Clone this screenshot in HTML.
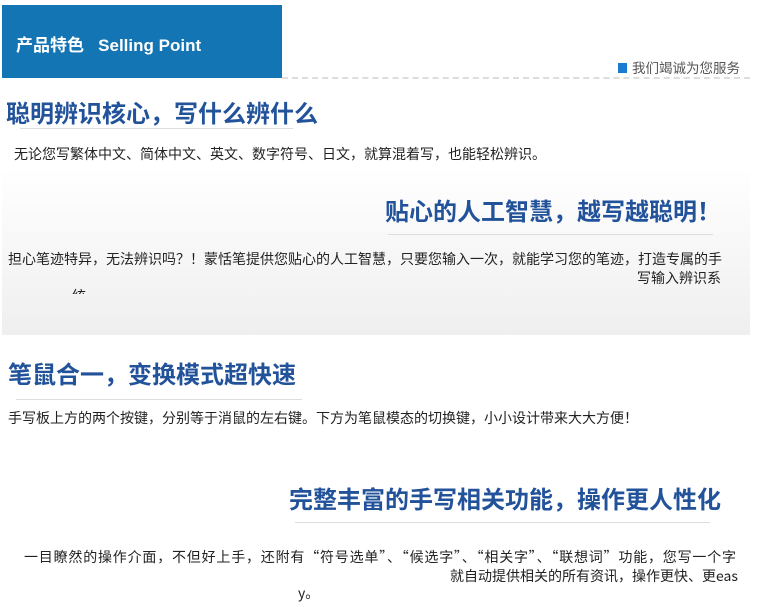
<!DOCTYPE html>
<html><head><meta charset="utf-8"><style>
body{margin:0;width:757px;height:607px;background:#fff;position:relative;overflow:hidden;font-family:"Noto Sans CJK SC","Liberation Sans",sans-serif;}
.a{position:absolute;white-space:nowrap;}
.h{font-size:24px;font-weight:bold;color:#22529a;line-height:30px;}
.t{font-size:14px;color:#222;line-height:20px;letter-spacing:0;}
.ul{position:absolute;height:1px;background:#ddd;}
</style></head><body>
<div class="a" style="left:2px;top:0;width:748px;height:335px;background:linear-gradient(#fff 0%,#fff 50%,#efefef 100%);"></div>
<div class="a" style="left:2px;top:5px;width:280px;height:73px;background:#1375b3;"></div>
<div class="a" style="left:16px;top:31px;color:#fff;font-weight:bold;font-size:17px;font-family:'Liberation Sans','Noto Sans CJK SC',sans-serif;">产品特色 &nbsp;&nbsp;Selling Point</div>
<div class="a" style="left:282px;top:77px;width:468px;border-top:2px dashed #ddd;"></div>
<div class="a" style="left:618px;top:63px;width:9px;height:10px;background:#1b7bd0;"></div>
<div class="a" style="left:632px;top:58px;font-size:13.5px;color:#555;line-height:18px;">我们竭诚为您服务</div>

<div class="a h" style="left:6px;top:97px;">聪明辨识核心，写什么辨什么</div>
<div class="ul" style="left:20px;top:128px;width:273px;"></div>
<div class="a t" style="left:14px;top:144px;">无论您写繁体中文、简体中文、英文、数字符号、日文，就算混着写，也能轻松辨识。</div>

<div class="a h" style="left:385px;top:195px;">贴心的人工智慧，越写越聪明！</div>
<div class="ul" style="left:388px;top:234px;width:325px;"></div>
<div class="a t" style="left:8px;top:249px;">担心笔迹特异，无法辨识吗？！蒙恬笔提供您贴心的人工智慧，只要您输入一次，就能学习您的笔迹，打造专属的手</div>
<div class="a t" style="left:637px;top:268px;">写输入辨识系</div>
<div class="a t" style="left:72px;top:286px;height:8px;overflow:hidden;">统</div>

<div class="a h" style="left:8px;top:358px;">笔鼠合一，变换模式超快速</div>
<div class="ul" style="left:16px;top:399px;width:286px;"></div>
<div class="a t" style="left:8px;top:408px;">手写板上方的两个按键，分别等于消鼠的左右键。下方为笔鼠模态的切换键，小小设计带来大大方便！</div>

<div class="a h" style="left:289px;top:483px;">完整丰富的手写相关功能，操作更人性化</div>
<div class="ul" style="left:295px;top:522px;width:415px;"></div>
<div class="a t" style="left:24px;top:547px;letter-spacing:0.8px;">一目瞭然的操作介面，不但好上手，还附有“符号选单”、“候选字”、“相关字”、“联想词”功能，您写一个字</div>
<div class="a t" style="left:450px;top:566px;">就自动提供相关的所有资讯，操作更快、更eas</div>
<div class="a t" style="left:298px;top:583px;">y。</div>
</body></html>
